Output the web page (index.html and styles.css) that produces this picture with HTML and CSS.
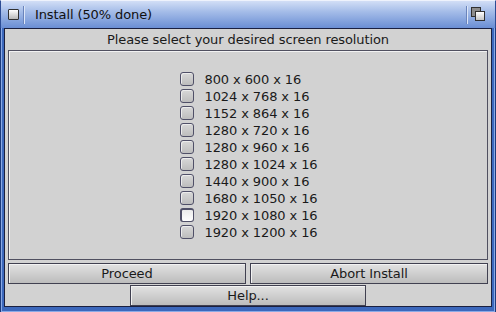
FILE: index.html
```html
<!DOCTYPE html>
<html lang="en">
<head>
    <meta charset="UTF-8">
    <title>Install (50% done)</title>
    <link rel="stylesheet" href="styles.css">
</head>
<body>
    <div class="window">
        <div class="titlebar">
            <span class="gadget close"></span>
            <span class="sep"></span>
            <span class="title">Install (50% done)</span>
            <span class="sep"></span>
            <span class="gadget depth"><i></i><i></i></span>
        </div>
        <div class="frame">
            <div class="content">
                <p class="prompt">Please select your desired screen resolution</p>
                <div class="group">
                    <div class="options">
                        <label class="opt"><span class="check"></span>800 x 600 x 16</label>
                        <label class="opt"><span class="check"></span>1024 x 768 x 16</label>
                        <label class="opt"><span class="check"></span>1152 x 864 x 16</label>
                        <label class="opt"><span class="check"></span>1280 x 720 x 16</label>
                        <label class="opt"><span class="check"></span>1280 x 960 x 16</label>
                        <label class="opt"><span class="check"></span>1280 x 1024 x 16</label>
                        <label class="opt"><span class="check"></span>1440 x 900 x 16</label>
                        <label class="opt"><span class="check"></span>1680 x 1050 x 16</label>
                        <label class="opt"><span class="check on"></span>1920 x 1080 x 16</label>
                        <label class="opt"><span class="check"></span>1920 x 1200 x 16</label>
                    </div>
                </div>
                <div class="buttons">
                    <button>Proceed</button>
                    <button>Abort Install</button>
                </div>
                <div class="help-row">
                    <button class="help">Help...</button>
                </div>
            </div>
        </div>
    </div>
</body>
</html>
```

FILE: styles.css
```css
/* Reset */
* {
    box-sizing: border-box;
}

body, p, button {
    margin: 0;
    padding: 0;
}

body {
    font-family: 'DejaVu Sans', sans-serif;
    font-size: 13px;
    letter-spacing: -0.1px;
    color: #1a1a1a;
    background: #d2d2d2;
}

.window {
    width: 496px;
    height: 312px;
    display: flex;
    flex-direction: column;
    overflow: hidden;
}

/* Barra de titulo */
.titlebar {
    height: 28px;
    flex-shrink: 0;
    display: flex;
    align-items: center;
    padding: 0 9px 0 7px;
    background: linear-gradient(#d2def6 0%, #a4bce8 40%, #6a8ed4 100%);
    border-top: 1px solid #eef2fc;
    border-left: 1px solid #2c4c94;
    border-right: 1px solid #2c4c94;
}

.titlebar .title {
    flex: 1;
    padding-left: 10px;
    color: #101010;
}

.sep {
    width: 2px;
    height: 18px;
    border-left: 1px solid #6a84bc;
    border-right: 1px solid #dce6f8;
}

.gadget {
    width: 11px;
    height: 11px;
    margin-right: 4px;
    border: 1px solid #303030;
    background: linear-gradient(#ffffff, #b8b8b8);
    border-radius: 1px;
}

.gadget.depth {
    position: relative;
    border: none;
    background: none;
    width: 15px;
    height: 15px;
    margin: 0 0 0 3px;
}

.gadget.depth i {
    position: absolute;
    width: 10px;
    height: 10px;
    border: 1px solid #303030;
    background: #8c8c8c;
}

.gadget.depth i + i {
    left: 4px;
    top: 4px;
    background: linear-gradient(#ffffff, #c4c4c4);
}

/* Moldura da janela */
.frame {
    flex: 1;
    display: flex;
    background: #3c68bc;
    border: 1px solid #1c3a7c;
    border-top: none;
    padding: 0 3px 5px 3px;
    box-shadow: inset 1px 0 #8aaae6, inset -1px 0 #8aaae6, inset 0 -1px #8aaae6;
}

.content {
    flex: 1;
    background: #d2d2d2;
    border: 1px solid #1a2040;
    padding: 0 3px;
    display: flex;
    flex-direction: column;
}

.prompt {
    text-align: center;
    height: 21px;
    line-height: 22px;
}

.group {
    height: 210px;
    border: 1px solid #505060;
    box-shadow: inset 1px 1px #f2f2f2;
    display: flex;
    justify-content: center;
    align-items: center;
}

.options {
    display: flex;
    flex-direction: column;
    padding-top: 1px;
    margin-left: 2px;
}

.opt {
    display: flex;
    align-items: center;
    height: 17px;
    gap: 10px;
}

.check {
    width: 14px;
    height: 14px;
    border: 1px solid #505068;
    border-radius: 3px;
    background: linear-gradient(#d8d8d8, #bdbdbd);
    box-shadow: inset 1px 1px #ececec;
}

.check.on {
    background: linear-gradient(#ececec, #ffffff);
    border-top-width: 2px;
    border-left-width: 2px;
    box-shadow: none;
}

/* Botoes */
.buttons {
    display: flex;
    gap: 4px;
    margin-top: 3px;
}

button {
    font-family: 'DejaVu Sans', sans-serif;
    font-size: 13px;
    letter-spacing: -0.1px;
    color: #1a1a1a;
    height: 21px;
    border: 1px solid #404050;
    background: linear-gradient(#e2e2e2, #bcbcbc);
    box-shadow: inset 1px 1px #f2f2f2;
}

.buttons button {
    flex: 1;
}

.help-row {
    display: flex;
    justify-content: center;
    margin-top: 1px;
}

.help {
    width: 236px;
}
```
